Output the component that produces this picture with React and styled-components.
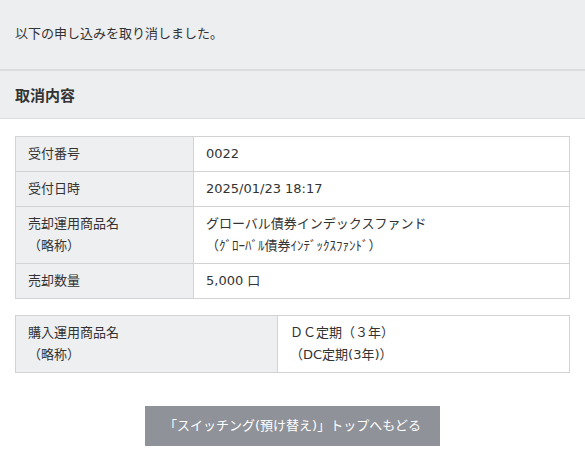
import React from "react";
import styled, { createGlobalStyle } from "styled-components";

const Global = createGlobalStyle`
  html, body { margin: 0; padding: 0; background: #fff; }
  body {
    font-family: "DejaVu Sans", "Noto Sans CJK JP", sans-serif;
    font-size: 13px;
    color: #333;
  }
`;

const Page = styled.div`
  width: 585px;
  min-height: 467px;
  background: #fff;
`;

const Message = styled.div`
  background: #edeef0;
  padding: 23px 15px 24px;
  line-height: 22px;
  border-bottom: 2px solid #dcdddf;
`;

const SectionTitle = styled.h2`
  margin: 0;
  background: #edeef0;
  padding: 14px 15px 11px;
  font-size: 15px;
  font-weight: bold;
  line-height: 22px;
  border-bottom: 1px solid #dcdddf;
`;

const Content = styled.div`
  padding: 17px 15px 0;
  display: flex;
  flex-direction: column;
  gap: 16px;
`;

const Table = styled.table`
  width: 100%;
  border-collapse: collapse;
  table-layout: fixed;
`;

const Label = styled.th`
  width: ${(p) => p.$w}px;
  background: #eeeff1;
  font-weight: normal;
  text-align: left;
  vertical-align: top;
  padding: 6px 12px;
  line-height: 22px;
  border: 1px solid #d3d3d3;
`;

const Value = styled.td`
  background: #fff;
  vertical-align: top;
  padding: 6px 12px;
  line-height: 22px;
  border: 1px solid #d3d3d3;
`;

const Line = styled.div`
  white-space: nowrap;
`;

const ButtonRow = styled.div`
  display: flex;
  justify-content: center;
  padding: 33px 0 21px;
`;

const BackButton = styled.button`
  height: 40px;
  padding: 0 19px;
  border: none;
  background: #8f9299;
  color: #fff;
  font-family: inherit;
  font-size: 13px;
  line-height: 40px;
  cursor: pointer;
`;

export default function App() {
  return (
    <Page>
      <Global />
      <Message>以下の申し込みを取り消しました。</Message>
      <SectionTitle>取消内容</SectionTitle>
      <Content>
        <Table>
          <tbody>
            <tr>
              <Label $w={153}>受付番号</Label>
              <Value>0022</Value>
            </tr>
            <tr>
              <Label $w={153}>受付日時</Label>
              <Value>2025/01/23 18:17</Value>
            </tr>
            <tr>
              <Label $w={153}>
                <Line>売却運用商品名</Line>
                <Line>（略称）</Line>
              </Label>
              <Value>
                <Line>グローバル債券インデックスファンド</Line>
                <Line>（ｸﾞﾛｰﾊﾞﾙ債券ｲﾝﾃﾞｯｸｽﾌｧﾝﾄﾞ）</Line>
              </Value>
            </tr>
            <tr>
              <Label $w={153}>売却数量</Label>
              <Value>5,000 口</Value>
            </tr>
          </tbody>
        </Table>
        <Table>
          <tbody>
            <tr>
              <Label $w={237}>
                <Line>購入運用商品名</Line>
                <Line>（略称）</Line>
              </Label>
              <Value>
                <Line>ＤＣ定期（３年）</Line>
                <Line>（DC定期(3年)）</Line>
              </Value>
            </tr>
          </tbody>
        </Table>
      </Content>
      <ButtonRow>
        <BackButton>「スイッチング(預け替え)」トップへもどる</BackButton>
      </ButtonRow>
    </Page>
  );
}
